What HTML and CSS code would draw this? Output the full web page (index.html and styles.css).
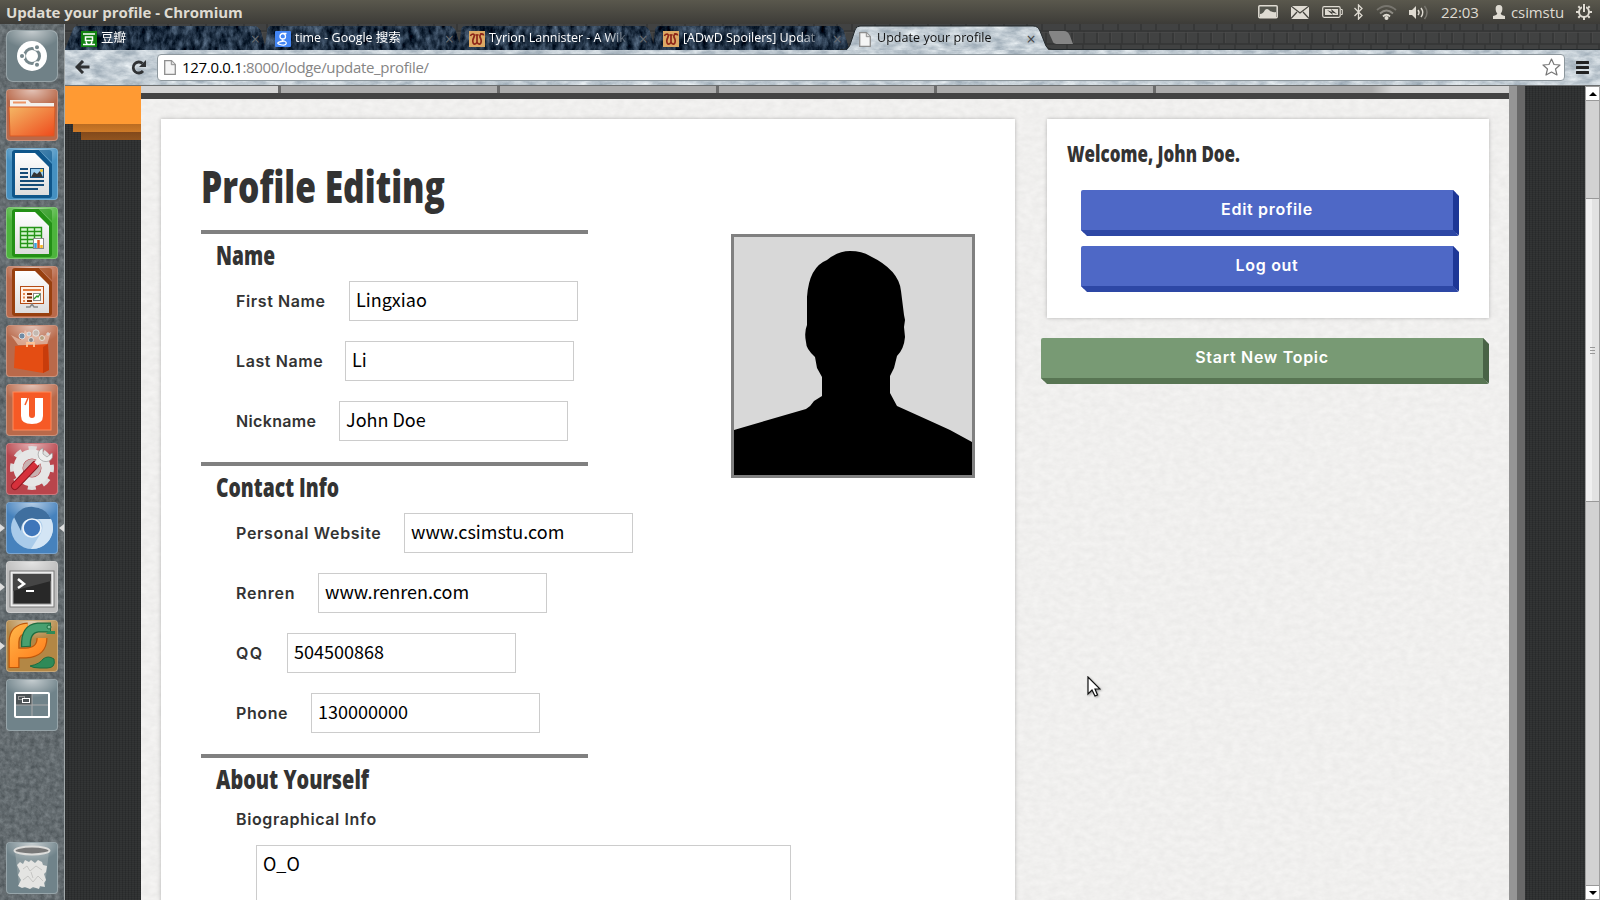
FILE: index.html
```html
<!DOCTYPE html>
<html lang="en">
<head>
<meta charset="utf-8">
<title>Update your profile</title>
<link rel="stylesheet" href="styles.css">
</head>
<body>
<svg class="defs" width="0" height="0">
  <defs>
    <filter id="granite" x="0" y="0" width="100%" height="100%" color-interpolation-filters="sRGB"><feTurbulence type="fractalNoise" baseFrequency=".2" numOctaves="4" seed="3"/><feColorMatrix values=".24 0 0 0 .27  .24 0 0 0 .3  .24 0 0 0 .315  0 0 0 0 1"/></filter>
    <filter id="darkstone" x="0" y="0" width="100%" height="100%" color-interpolation-filters="sRGB"><feTurbulence type="fractalNoise" baseFrequency=".16 .09" numOctaves="5" seed="8" result="n"/><feColorMatrix in="n" values=".6 0 0 0 -.17  .65 0 0 0 -.13  .7 0 0 0 -.08  0 0 0 0 1"/><feComposite in2="SourceAlpha" operator="in"/></filter>
    <filter id="lightstone" x="0" y="0" width="100%" height="100%" color-interpolation-filters="sRGB"><feTurbulence type="fractalNoise" baseFrequency=".07 .16" numOctaves="5" seed="12" result="n"/><feColorMatrix in="n" values=".4 0 0 0 .56  .36 0 0 0 .62  .32 0 0 0 .67  0 0 0 0 1"/><feComposite in2="SourceAlpha" operator="in"/></filter>
    <filter id="paper" x="0" y="0" width="100%" height="100%" color-interpolation-filters="sRGB"><feTurbulence type="fractalNoise" baseFrequency=".12 .18" numOctaves="4" seed="5"/><feColorMatrix values=".05 0 0 0 .916  .05 0 0 0 .913  .05 0 0 0 .908  0 0 0 0 1"/></filter>
    <linearGradient id="folder" x2="1" y2="1"><stop stop-color="#f4b765"/><stop offset="1" stop-color="#ee4a1c"/></linearGradient>
    <linearGradient id="sheet" x2="0" y2="1"><stop stop-color="#fff"/><stop offset="1" stop-color="#ddd"/></linearGradient>
    <linearGradient id="snakeO" gradientUnits="userSpaceOnUse" x1="4" y1="4" x2="42" y2="48"><stop stop-color="#ffb74a"/><stop offset="1" stop-color="#ff7414"/></linearGradient>
    <pattern id="bricks" width="38" height="26" patternUnits="userSpaceOnUse"><rect width="38" height="26" fill="#414242"/><path d="M0 7H38M0 20H38M6 7V20M19 7V20M31 7V20M12 0V7M27 0V7M14 20V26M30 20V26" stroke="#343535" stroke-width="1.500"/><path d="M0 8.500H38M7.500 8V19M20.500 8V19" stroke="#4a4b4b" stroke-width=".7"/></pattern>
    <symbol id="page" viewBox="0 0 12 15"><path d="M.7.7H7.500L11.300 4.500V14.300H.7Z" fill="#f5f5f5" stroke="#8e8e8e" stroke-width="1.300"/><path d="M7.300.7V4.700H11.300" fill="#ddd" stroke="#8e8e8e"/></symbol>
    <symbol id="wiki" viewBox="0 0 16 16"><rect width="16" height="16" fill="#dca964"/><path d="M1.500 5Q2 3 4 3Q6 3.500 5 6Q2.500 11 5 13Q7 13.500 8 11V5M6.500 3.500Q8 5 9.500 3.500M11 3Q14.500 2.500 14.500 4.500M8 11Q9 13.500 11 13Q13.500 11 11 6Q10.500 3.500 13 3" fill="none" stroke="#8d2618" stroke-width="1.700"/></symbol>
    <symbol id="doc" viewBox="0 0 40 48"><path d="M3 0H27L40 14V45Q40 48 37 48H3Q0 48 0 45V3Q0 0 3 0Z"/><path d="M27 0H37Q40 0 40 3V12Z" opacity=".6"/><path d="M3 3H23L37 17V45H3Z" fill="url(#sheet)"/></symbol>
  </defs>
</svg>

<header class="panel">
  <span class="panel-title">Update your profile - Chromium</span>
  <div class="tray">
    <svg class="t1" width="20" height="14" viewBox="0 0 20 14"><rect x=".8" y=".8" width="18.400" height="12" rx="1" fill="#55564e" stroke="#dfdbd2" stroke-width="1.500"/><path d="M2 11V9Q5 9 7 5Q9 3 11 5Q14 8 18 7V12H2Z" fill="#dfdbd2"/></svg>
    <svg class="t2" width="18" height="13" viewBox="0 0 18 13"><rect width="18" height="13" fill="#dfdbd2"/><path d="M0 0L9 7L18 0M0 12.500L6 6M18 12.500L12 6" stroke="#45443e" stroke-width="1.200" fill="none"/></svg>
    <svg class="t3" width="21" height="12" viewBox="0 0 21 12"><rect x=".7" y=".7" width="17.500" height="10.600" rx="1.500" fill="none" stroke="#dfdbd2" stroke-width="1.200"/><rect x="3" y="3" width="13" height="6" fill="#dfdbd2"/><path d="M19 3.500H20.300V8.500H19" stroke="#dfdbd2" fill="none"/><path d="M5 4L10 6L9 3L15 8L10 6.500L11 9Z" fill="#3c3b37"/></svg>
    <svg class="t4" width="9" height="16" viewBox="0 0 9 16"><path d="M.5 4L8 11.500L4.500 15V1L8 4.500L.5 12" fill="none" stroke="#dfdbd2" stroke-width="1.300"/></svg>
    <svg class="t5" width="21" height="15" viewBox="0 0 21 15"><g fill="none" stroke-width="1.800"><path d="M1 5Q10.500-3 20 5" stroke="#77756e"/><path d="M4 8.500Q10.500 2.500 17 8.500" stroke="#8f8c85"/><path d="M7 11.500Q10.500 8 14 11.500" stroke="#dfdbd2"/></g><circle cx="10.500" cy="13" r="2" fill="#dfdbd2"/></svg>
    <svg class="t6" width="20" height="15" viewBox="0 0 20 15"><path d="M0 5H3L7 1V14L3 10H0Z" fill="#dfdbd2"/><g fill="none" stroke="#dfdbd2" stroke-width="1.500"><path d="M9 5Q11 7.500 9 10"/><path d="M12 3Q15.500 7.500 12 12"/><path d="M15.500 1Q20.500 7.500 15.500 14" stroke="#77756e"/></g></svg>
    <span class="clock">22:03</span>
    <svg class="t7" width="14" height="14" viewBox="0 0 14 14"><path d="M7 0Q11 0 10.300 5Q10 7 8.700 8.500Q9 10 13 11V14H1V11Q5 10 5.300 8.500Q4 7 3.700 5Q3 0 7 0Z" fill="#dfdbd2"/></svg>
    <span class="user">csimstu</span>
    <svg class="t8" width="16" height="16" viewBox="0 0 16 16"><circle cx="8" cy="8" r="5" fill="none" stroke="#dfdbd2" stroke-width="2"/><path d="M8 0V3M8 13V16M0 8H3M13 8H16M2.300 2.300L4 4M12 4L13.700 2.300M2.300 13.700L4 12M12 12L13.700 13.700" stroke="#dfdbd2" stroke-width="2"/><path d="M8 1V8" stroke="#45443e" stroke-width="4"/><path d="M8 1V8" stroke="#dfdbd2" stroke-width="2"/></svg>
  </div>
</header>

<div class="desktop">
  <nav class="launcher">
    <svg class="texture" width="64" height="876"><rect width="64" height="876" filter="url(#granite)"/></svg>
    <div class="tile ubuntu"><svg viewBox="0 0 52 52"><circle cx="26" cy="26" r="15" fill="#fff"/><circle cx="26" cy="26" r="7.500" fill="none" stroke="#76878c" stroke-width="3"/><g stroke="#fff" stroke-width="1.500"><circle cx="16" cy="26" r="2.800" fill="#76878c"/><circle cx="31" cy="17.300" r="2.800" fill="#76878c"/><circle cx="31" cy="34.700" r="2.800" fill="#76878c"/></g></svg></div>
    <div class="tile brown"><svg viewBox="0 0 52 52"><path d="M4 11H22L25 14H48V20H4Z" fill="#f3f0ec"/><path d="M7 12.500H20V14.500H7Z" fill="#ec9465"/><path d="M3 18H49L48 47H4Z" fill="url(#folder)" stroke="#d85b24"/></svg></div>
    <div class="tile blue"><svg viewBox="0 0 52 52"><use href="#doc" x="6" y="2" width="40" height="48" fill="#0f568a"/><path d="M14 21H22M14 25H22M14 29H22M14 33H38M14 37H38M14 41H32" stroke="#164c78" stroke-width="2"/><rect x="24.500" y="20.500" width="13" height="9" fill="#9fd0ef" stroke="#164c78"/><path d="M25 29L28 24L31 26L34 23L37 29Z" fill="#333"/><circle cx="35.500" cy="22.500" r="1.500" fill="#f5c531"/></svg></div>
    <div class="tile green"><svg viewBox="0 0 52 52"><use href="#doc" x="6" y="2" width="40" height="48" fill="#239016"/><rect x="14.500" y="20.500" width="21" height="20" fill="#d6f5cf"/><path d="M14.500 20.500H35.500V40.500H14.500ZM14 24.500H36M14 28.500H36M14 32.500H36M14 36.500H36M21.500 20V40M28.500 20V40" stroke="#259417" fill="none" stroke-width="1.400"/><rect x="27.500" y="31.500" width="10" height="10" fill="#fff" stroke="#888"/><path d="M29.500 41V36" stroke="#38a1dd" stroke-width="2.500"/><path d="M32.500 41V33" stroke="#e15b20" stroke-width="2.500"/><path d="M35.500 41V38" stroke="#f5b825" stroke-width="2.500"/></svg></div>
    <div class="tile brown"><svg viewBox="0 0 52 52"><use href="#doc" x="6" y="2" width="40" height="48" fill="#98400f"/><rect x="14.500" y="20.500" width="23" height="17" fill="#fff1e6" stroke="#b44c16"/><path d="M17 24H35" stroke="#e07c3e" stroke-width="2"/><path d="M17 28H19M17 31.500H19M17 35H19" stroke="#e68850" stroke-width="2"/><path d="M21 28H26M21 31.500H26M21 35H26" stroke="#81330a" stroke-width="2"/><rect x="27.500" y="27.500" width="7" height="7" fill="#fff" stroke="#888"/><path d="M28 33L31 30L32 31L34 28" stroke="#299726" fill="none" stroke-width="1.300"/><path d="M20 41H24L26 38L28 41H32" fill="none" stroke="#888" stroke-width="1.500"/></svg></div>
    <div class="tile brown"><svg viewBox="0 0 52 52"><path d="M12 20L5 10L15 15L19 5L25 12L30 3L34 13L45 7L41 20Z" fill="#f6d9c8" opacity=".55"/><g stroke="#eee" stroke-width=".8"><circle cx="16" cy="11" r="3" fill="#6e8ba5"/><circle cx="30" cy="8" r="3.200" fill="#c4b8b0"/><circle cx="36" cy="13" r="2.500" fill="#b8a07e"/><circle cx="25" cy="15" r="2.500" fill="#888"/><circle cx="23" cy="9" r="2" fill="#b6c2c9"/><circle cx="42" cy="9" r="1.200" fill="#aaa"/></g><path d="M9 21L42 19L43 45L37 48L8 43Z" fill="#e44d13"/><path d="M37 22L42 19L43 45L37 48Z" fill="#c83c0b"/><path d="M21 22V18H28V22" stroke="#ffc394" stroke-width="1.800" fill="none"/></svg></div>
    <div class="tile brown"><svg viewBox="0 0 52 52"><rect x="7" y="8" width="38" height="38" fill="#f65a26" stroke="#ff8b5c"/><path d="M15 14H23V31Q23 34 26 34T29 31V14H37V32Q37 40 26 40T15 32Z" fill="#fff"/><path d="M19 21L22 14" stroke="#f65a26" stroke-width="1.500"/></svg></div>
    <div class="tile red"><svg viewBox="0 0 52 52"><circle cx="26" cy="25" r="19.500" fill="none" stroke="#dedede" stroke-width="5" stroke-dasharray="8 7.310" stroke-dashoffset="4"/><circle cx="26" cy="25" r="14" fill="none" stroke="#e6e6e6" stroke-width="9"/><circle cx="26" cy="25" r="9" fill="#c8b0b0"/><path d="M9 43L29 22" stroke="#8f1720" stroke-width="8" stroke-linecap="round"/><path d="M9 43L29 22" stroke="#d6303b" stroke-width="6" stroke-linecap="round"/><path d="M30 21L36 15" stroke="#eee" stroke-width="5"/><path d="M37 5Q30 8 33 15Q37 20 43 18Q48 15 46 10L41 14L37 11Z" fill="#eee" stroke="#999" stroke-width=".7"/></svg></div>
    <div class="tile sky"><i class="arrow"></i><i class="arrow focus"></i><svg viewBox="0 0 52 52"><circle cx="26" cy="26" r="21" fill="#a9cbea"/><path d="M8 15A21 21 0 0 1 45 17H26Q15 17 15 29Z" fill="#3f6f9f"/><path d="M45 17A21 21 0 0 1 25 47L35 31Q39 22 32 17Z" fill="#d3e5f5"/><circle cx="26" cy="26" r="9" fill="#3f76ba" stroke="#eef5fb" stroke-width="1.700"/></svg></div>
    <div class="tile silver"><i class="arrow"></i><svg viewBox="0 0 52 52"><rect x="4" y="10" width="44" height="36" fill="#eee" stroke="#777"/><rect x="7" y="13" width="38" height="30" fill="#282828" stroke="#999"/><path d="M7 13H45V20L7 30Z" fill="#454545"/><path d="M12 18L18 23L12 27" fill="none" stroke="#fff" stroke-width="2.500"/><path d="M20 30H28" stroke="#fff" stroke-width="2"/></svg></div>
    <div class="tile gold"><i class="arrow"></i><svg viewBox="0 0 52 52"><path d="M24 46Q34 44 37 39Q42 35 48 39Q50 48 41 48H34Q27 48 24 46Z" fill="#2f8a58" stroke="#1e6c40"/><path d="M8 48V22Q8 9 22 8M9 33H20Q36 32 36 18" fill="none" stroke="#bd570b" stroke-width="11"/><path d="M8 47V22Q8 9 22 8M9 33H20Q36 32 36 18" fill="none" stroke="url(#snakeO)" stroke-width="8.500"/><path d="M20 27Q19 9 32 7.500H45" fill="none" stroke="#1e6c40" stroke-width="10"/><path d="M20 26Q19 9 32 7.500H44" fill="none" stroke="#48a070" stroke-width="7.500"/><path d="M42 11H49V14H40Z" fill="#2f8a58"/><circle cx="43" cy="7" r="2" fill="#83c49c" stroke="#1e6c40"/></svg></div>
    <div class="tile slate"><svg viewBox="0 0 52 52"><rect x="9" y="14" width="17" height="12" fill="#4d5457"/><path d="M26 15V38M9 26H43" stroke="#aaa"/><rect x="9" y="14" width="34" height="24" rx="1" fill="none" stroke="#fff" stroke-width="2"/><rect x="12.500" y="17.500" width="6" height="3" fill="none" stroke="#999"/><rect x="16.500" y="19.500" width="7" height="4" fill="#4d5457" stroke="#fff"/></svg></div>
    <div class="tile slate trash"><svg viewBox="0 0 52 52"><path d="M9 9L13 44Q26 49 39 44L43 9Z" fill="#bec5c5" opacity=".35"/><path d="M11 23L14 20L17 22L19 18L23 20L25 18L29 21L32 18L36 20L37 23L41 24L40 30L38 32L40 38L38 41L39 45L34 44L33 47L27 45L24 47L19 45L16 46L12 44L15 38L12 33L14 29Z" fill="#e4e4e2"/><path d="M17 27L21 24L24 29L30 24L36 28M17 38L22 34L27 40L32 34L37 39M25 30L27 36" stroke="#c6c6c4" fill="none"/><ellipse cx="26" cy="8.500" rx="17.500" ry="4" fill="#777" stroke="#dcdcda" stroke-width="2"/></svg></div>
  </nav>

  <main class="browser">
    <div class="tabstrip">
      <svg class="texture" width="1535" height="27">
        <rect width="1535" height="27" fill="url(#bricks)"/>
        <g stroke="#0d1318"><path d="M0 26.500L9 4Q11 2 14 2H187Q193 2 195 6L201 26.500Z" filter="url(#darkstone)"/><path d="M200 25L203 4Q204 2 207 2H382Q388 2 390 6L396 26.500H200Z" filter="url(#darkstone)"/><path d="M394 25L397 4Q398 2 401 2H576Q582 2 584 6L590 26.500H394Z" filter="url(#darkstone)"/><path d="M588 25L591 4Q592 2 595 2H770Q776 2 778 6L784 26.500H588Z" filter="url(#darkstone)"/></g>
        <path d="M780 27Q783 26 785 21L790 6Q791 2 795 2H968Q973 2 975 7L981 22Q983 27 986 27Z" filter="url(#lightstone)"/>
        <path d="M775 25.500Q783 26 785 21L790 6Q791 2 795 2H968Q973 2 975 7L981 22Q983 25.500 990 25.500H1535" fill="none" stroke="#22282b"/>
        <path d="M984 7H999Q1003 7 1005 12L1008 20H993Q989 20 988 18L984 9Z" fill="#858585"/>
      </svg>
      <div class="tab"><svg width="16" height="16"><rect width="16" height="16" fill="#128112"/><path d="M2 3H14M4.500 6H11.500V9.500H4.500ZM5 10.500L6 13M11 10.500L10 13M2 13.500H14" stroke="#fff" fill="none" stroke-width="1.500"/></svg><span class="tab-label">豆瓣</span><b>×</b></div>
      <div class="tab"><svg width="16" height="16"><rect width="16" height="16" rx="1" fill="#4285f4"/><path d="M11.500 2.500H7.500Q5 3 5 5.500T8 8Q10.500 8 10.500 5.500T8 2.700M8 8Q6 9.500 9 10Q12 11 11 13T5 13.500T6 10.500L9 10" fill="none" stroke="#fff" stroke-width="1.300"/></svg><span class="tab-label">time - Google 搜索</span><b>×</b></div>
      <div class="tab"><svg width="16" height="16"><use href="#wiki"/></svg><span class="tab-label">Tyrion Lannister - A Wik</span><b>×</b></div>
      <div class="tab"><svg width="16" height="16"><use href="#wiki"/></svg><span class="tab-label">[ADwD Spoilers] Updat</span><b>×</b></div>
      <div class="tab active"><svg width="16" height="15"><use href="#page" x="2" width="12" height="15"/></svg><span class="tab-label">Update your profile</span><b>×</b></div>
    </div>
    <div class="toolbar">
      <svg class="texture" width="1535" height="35"><rect width="1535" height="35" filter="url(#lightstone)"/></svg>
      <svg class="back" width="15" height="14" viewBox="0 0 15 14"><path d="M8 1L2 7L8 13M2 7H14.500" fill="none" stroke="#303234" stroke-width="3"/></svg>
      <svg class="reload" width="16" height="15" viewBox="0 0 16 15"><path d="M11.500 3.500A5.500 5.500 0 1 0 12 11" fill="none" stroke="#303234" stroke-width="2.800"/><path d="M15 0V7H8Z" fill="#303234"/></svg>
      <div class="urlbar"><svg width="12" height="15"><use href="#page"/></svg><span class="url">127.0.0.1<em>:8000/lodge/update_profile/</em></span><svg class="star" width="19" height="18" viewBox="0 0 19 18"><path d="M9.500 1L12 6.500L18 7L13.500 11L15 17L9.500 14L4 17L5.500 11L1 7L7 6.500Z" fill="#fff" stroke="#777" stroke-linejoin="round" stroke-width="1.200"/></svg></div>
      <svg class="menu" width="13" height="13"><path d="M1 1.500H12M1 6.500H12M1 11.500H12" stroke="#222" stroke-width="3" stroke-linecap="round"/></svg>
    </div>
    <div class="viewport">
      <div class="side-left"><div class="ribbon r1"></div><div class="ribbon r2"></div><div class="ribbon r3"></div></div>
      <div class="site">
        <svg class="texture" width="1368" height="814"><rect width="1368" height="814" filter="url(#paper)"/></svg>
        <div class="menubar"><i class="end first"></i><i></i><i></i><i></i><i></i><i class="end last"></i></div>
        <div class="columns">
          <section class="card profile">
            <svg class="title" width="260" height="60"><text x="0" y="43.500" textLength="244" lengthAdjust="spacingAndGlyphs">Profile Editing</text></svg>
            <div class="body">
              <form>
                <fieldset class="names">
                  <svg class="legend" width="200" height="40"><text x="0" y="31" textLength="59" lengthAdjust="spacingAndGlyphs">Name</text></svg>
                  <div class="row"><label class="w-first">First Name</label><input value="Lingxiao"></div>
                  <div class="row"><label class="w-last">Last Name</label><input value="Li"></div>
                  <div class="row"><label class="w-nick">Nickname</label><input value="John Doe"></div>
                </fieldset>
                <fieldset class="contact">
                  <svg class="legend" width="200" height="40"><text x="0" y="31" textLength="123" lengthAdjust="spacingAndGlyphs">Contact Info</text></svg>
                  <div class="row"><label class="w-site">Personal Website</label><input value="www.csimstu.com"></div>
                  <div class="row"><label class="w-ren">Renren</label><input value="www.renren.com"></div>
                  <div class="row"><label class="w-qq">QQ</label><input value="504500868"></div>
                  <div class="row"><label class="w-phone">Phone</label><input value="130000000"></div>
                </fieldset>
                <fieldset>
                  <svg class="legend" width="200" height="40"><text x="0" y="31" textLength="153" lengthAdjust="spacingAndGlyphs">About Yourself</text></svg>
                  <label class="bio">Biographical Info</label>
                  <textarea>O_O</textarea>
                </fieldset>
              </form>
              <svg class="avatar" viewBox="0 0 238 238"><rect width="238" height="238" fill="#d8d8d8"/><path d="M0 193L72 172Q77 169 80 164L88 159V140L83 131L81 120Q72 112 72 105Q70 95 73 88V60Q75 30 93 23Q104 14 116 14Q128 14 136 19Q165 33 167 54L170 78L171 83L170 90L171 100Q170 112 163 119L160 131L156 139V156L163 169Q203 187 216 193L238 205V238H0Z"/></svg>
            </div>
          </section>
          <aside>
            <section class="card welcome">
              <svg class="hello" width="300" height="36"><text x="0" y="23.500" textLength="173" lengthAdjust="spacingAndGlyphs">Welcome, John Doe.</text></svg>
              <a class="btn">Edit profile</a>
              <a class="btn">Log out</a>
            </section>
            <a class="btn topic">Start New Topic</a>
          </aside>
        </div>
      </div>
      <div class="side-right"></div>
      <div class="scrollbar"><div class="arrow-box up"></div><div class="thumb"><i></i><i></i><i></i></div><div class="arrow-box down"></div></div>
    </div>
  </main>
</div>
<svg class="cursor" width="14" height="21" viewBox="0 0 14 21"><path d="M1 1V18L5 14L8 20L10.500 19L8 13H13Z" fill="#fff" stroke="#111" stroke-width="1.200"/></svg>
</body>
</html>
```
FILE: styles.css
```css
* { box-sizing: border-box; }
body { margin: 0; width: 1600px; height: 900px; overflow: hidden; font-family: "Open Sans", "Noto Sans CJK SC", sans-serif; background: #2e3030; }
svg { display: block; flex: none; }
.defs { position: absolute; }
.texture { position: absolute; left: 0; top: 0; z-index: -1; }

/* desktop panel */
.panel { height: 24px; display: flex; align-items: center; padding: 0 8px 0 6px; background: linear-gradient(#5a584d, #3d3c38); color: #dfdbd2; font-size: 15px; line-height: 24px; }
.panel-title { font-weight: 700; letter-spacing: -.06px; }
.tray { margin-left: auto; display: flex; align-items: center; }
.t2 { margin-left: 13px; }
.t3 { margin-left: 13px; }
.t4 { margin-left: 11px; }
.t5 { margin-left: 13px; }
.t6 { margin-left: 12px; }
.clock { margin-left: 12px; width: 40px; letter-spacing: -.1px; white-space: nowrap; }
.t7 { margin-left: 11px; }
.user { margin-left: 5px; width: 53px; letter-spacing: -.1px; }
.t8 { margin-left: 12px; }

.desktop { display: flex; height: 876px; }

/* launcher */
.launcher { position: relative; z-index: 0; width: 65px; padding: 6px 0 6px 6px; display: flex; flex-direction: column; gap: 7px; border-right: 1px solid #a3a9ab; }
.tile { position: relative; width: 52px; height: 52px; flex: none; border-radius: 4px; border: 1px solid rgba(255,255,255,.28); }
.tile svg { width: 52px; height: 52px; margin: -1px; position: relative; }
.tile::before { content: ""; position: absolute; inset: 0; border-radius: 4px; background: radial-gradient(ellipse 30px 18px at 50% 0, rgba(255,255,255,.6), transparent); }
.ubuntu { background: #708187; border-radius: 7px; }
.brown { background: #b9694a; }
.blue { background: #4590c1; }
.green { background: #4db43d; }
.red { background: #b9454c; }
.sky { background: #4682bd; }
.silver { background: #bcbcbc; }
.gold { background: #b38745; }
.slate { background: #70838a; }
.trash { margin-top: auto; }
.arrow { position: absolute; left: -7px; top: 21px; border: 4px solid transparent; border-left: 5px solid #dedede; border-right: 0; }
.arrow.focus { left: 52px; border-right: 5px solid #dedede; border-left: 0; }

/* browser chrome */
.browser { flex: 1; min-width: 0; display: flex; flex-direction: column; }
.tabstrip { position: relative; z-index: 0; height: 26px; padding: 4px 0 0 16px; display: flex; }
.tab { width: 194px; display: flex; align-items: center; height: 22px; color: #fff; font-size: 12.500px; }
.tab-label { width: 149px; margin-left: 4px; white-space: nowrap; -webkit-mask-image: linear-gradient(90deg, #000 116px, transparent 142px); mask-image: linear-gradient(90deg, #000 116px, transparent 142px); line-height: 20px; margin-top: -3px; letter-spacing: -.02px; }
.tab b { width: 14px; margin-left: -2px; text-align: center; font-size: 16px; line-height: 16px; font-weight: 400; color: #696e73; }
.tab.active { color: #111; }
.tab.active .tab-label { letter-spacing: .05px; }
.tab.active b { color: #444; }
.toolbar { position: relative; z-index: 0; height: 36px; border-bottom: 1px solid #6c6f70; display: flex; align-items: center; padding: 0 11px 1px 10px; }
.reload { margin-left: 41px; }
.urlbar { margin-left: 10px; width: 1409px; height: 27px; border: 1px solid #8d979d; border-radius: 4px; background: #fff; display: flex; align-items: center; padding: 0 3px 0 6px; }
.url { margin-left: 6px; font-size: 15px; line-height: 22px; letter-spacing: -.32px; color: #000; }
.url em { font-style: normal; color: #858585; }
.star { margin-left: auto; }
.menu { margin-left: 11px; }

/* web page */
.viewport { flex: 1; display: flex; min-height: 0; background: repeating-linear-gradient(90deg, rgba(0,0,0,.14) 0 1px, transparent 1px 3px), repeating-linear-gradient(0deg, #333535 0 1px, #2e3031 1px 2px); }
.side-left { width: 76px; display: flex; flex-direction: column; align-items: flex-end; }
.ribbon { height: 8px; }
.r1 { height: 38px; width: 76px; background: #ff9a33; }
.r2 { width: 68px; background: linear-gradient(#b96c22, #cd7a28); }
.r3 { width: 60px; background: linear-gradient(#82491b, #91541f); }
.site { position: relative; z-index: 0; width: 1368px; overflow: hidden; }
.menubar { display: flex; height: 13px; border-bottom: 6px solid #434343; background: #acacac; }
.menubar i { width: 218.750px; border-left: 3px solid #6b6b6b; }
.menubar i.first { width: 137px; background: #d4d4d4; border: 0; }
.menubar i.last { flex: 1; background: linear-gradient(90deg, #acacac 216px, #d4d4d4 236px); }
.columns { display: flex; justify-content: space-between; padding: 20px 20px 0; align-items: flex-start; }
.card { background: #fff; box-shadow: 0 0 4px rgba(0,0,0,.25); }
.profile { width: 854px; height: 900px; padding: 40px 40px 0; }
.title { font: 800 45px "Open Sans", sans-serif; fill: #333; overflow: visible; }
.body { display: flex; justify-content: space-between; margin-top: 11px; }
form { width: 387px; }
fieldset { margin: 0; padding: 0 0 0 15px; border: 0; border-top: 4px solid #808080; width: 387px; min-width: 0; }
.names { height: 232px; }
.contact { height: 292px; }
.legend { font: 800 26.500px "Open Sans", sans-serif; fill: #333; margin-bottom: 7px; overflow: visible; }
.row { display: flex; align-items: center; height: 40px; margin: 0 0 20px 20px; }
label { font: 600 16px/20px Inter, sans-serif; color: #333; letter-spacing: .6px; white-space: nowrap; flex: none; }
.w-first { width: 113px; }
.w-last { width: 109px; }
.w-nick { width: 103px; letter-spacing: .35px; }
.w-site { width: 168px; letter-spacing: .68px; }
.w-ren { width: 82px; letter-spacing: .75px; }
.w-qq { width: 51px; letter-spacing: 1.300px; }
.w-phone { width: 75px; }
input { width: 229px; height: 40px; flex: none; border: 1px solid #ccc; padding: 0 6px 5px; font: 18px "Noto Sans CJK SC", sans-serif; color: #000; background: #fff; }
.bio { display: block; margin: 11px 0 0 20px; }
textarea { display: block; margin: 16px 0 0 40px; width: 535px; height: 120px; border: 1px solid #ccc; padding: 2px 6px; font: 18px/30px "Noto Sans CJK SC", sans-serif; color: #000; resize: none; outline: 0; }
.avatar { width: 244px; height: 244px; border: 3px solid #808080; margin-top: 4px; }
aside { width: 448px; }
.welcome { margin-left: 6px; height: 199px; padding: 19px 30px 0 34px; }
.hello { font: 800 23px "Open Sans", sans-serif; fill: #333; margin: 0 0 16px -14px; overflow: visible; }
.btn { display: block; height: 46px; margin-bottom: 10px; border-style: solid; border-width: 0 6px 6px 0; border-color: #1e3796 #1e3796 #2d47a5; background: #4e68c6; clip-path: polygon(0 0, calc(100% - 6px) 0, 100% 6px, 100% 100%, 6px 100%, 0 calc(100% - 6px)); border-radius: 2px; text-align: center; color: #fff; font: 600 16px/39px Inter, sans-serif; letter-spacing: .7px; }
.topic { margin-top: 20px; line-height: 38px; background: #789a74; border-color: #496346 #496346 #587553; }
.side-right { width: 76px; border-left: 8px solid #959595; box-shadow: inset 8px 0 #686868; }
.scrollbar { width: 15px; background: #d2d2d2; border-left: 1px solid #a0a0a0; border-right: 1px solid #a0a0a0; display: flex; flex-direction: column; }
.arrow-box { height: 15px; background: #fff; border: solid #999; border-width: 1px 0; display: flex; justify-content: center; align-items: center; }
.arrow-box::before { content: ""; border: 4px solid transparent; border-bottom-color: #000; border-top: 0; }
.down { margin-top: auto; }
.down::before { border-top: 4px solid #000; border-bottom: 0; }
.thumb { margin-top: 97px; height: 304px; background: linear-gradient(90deg, #f0f0f0 50%, #e2e2e2 50%); border: solid #999; border-width: 1px 0; display: flex; flex-direction: column; gap: 2px; align-items: center; justify-content: center; }
.thumb i { width: 5px; height: 1px; background: #999; }
.cursor { position: absolute; left: 1087px; top: 676px; filter: drop-shadow(1px 1px 1px rgba(0,0,0,.35)); }
```
